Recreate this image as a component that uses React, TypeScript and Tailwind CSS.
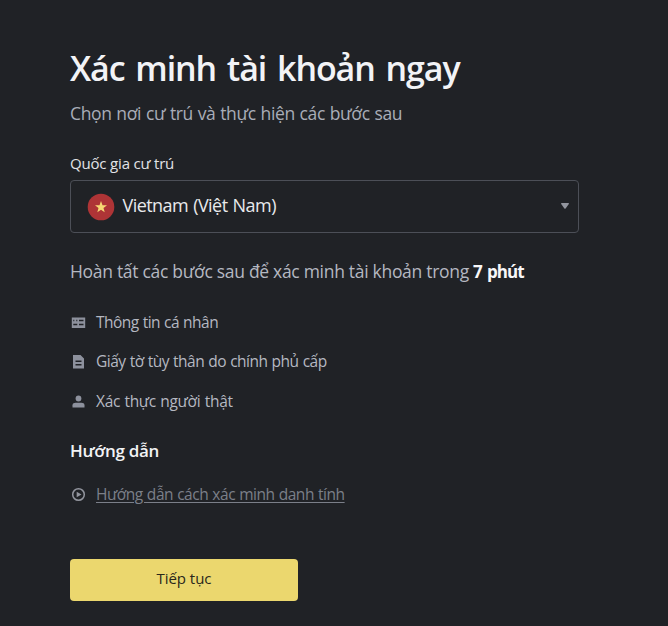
import React from "react";

const icons = {
  card: (
    <svg viewBox="0 0 16 16" className="h-4 w-4 shrink-0" fill="currentColor">
      <path fillRule="evenodd" d="M1.800 3.500h13.400v10.500H1.800zM3.300 9.700v1.600h4V9.700zM9 5.700v1.600h4.500V5.700zM9 9.700v1.600h4.500V9.700zM3.300 5.700v1.600h1V5.700zM6.300 5.700v1.600h1V5.700z" />
    </svg>
  ),
  document: (
    <svg viewBox="0 0 16 16" className="h-4 w-4 shrink-0" fill="currentColor">
      <path fillRule="evenodd" d="M3 2h7.500L14 5.500v10H3zM5.500 7.500v1.400h6V7.500zM5.500 11v1.400h6V11z" />
    </svg>
  ),
  person: (
    <svg viewBox="0 0 16 16" className="h-4 w-4 shrink-0" fill="currentColor">
      <circle cx="8.500" cy="5.500" r="2.900" />
      <path d="M2.500 14.500v-2.200c0-1.800 1.600-2.500 3-2.500h6c1.500 0 3 .7 3 2.500v2.200z" />
    </svg>
  ),
};

const steps = [
  { icon: icons.card, text: "Thông tin cá nhân", spacing: "tracking-[-0.52px] [word-spacing:0.5px]" },
  { icon: icons.document, text: "Giấy tờ tùy thân do chính phủ cấp", spacing: "tracking-[-0.49px] [word-spacing:0.5px]" },
  { icon: icons.person, text: "Xác thực người thật", spacing: "tracking-[-0.28px] [word-spacing:0.5px]" },
];

export default function App() {
  return (
    <main className="flex h-[626px] w-[668px] flex-col items-start overflow-hidden whitespace-nowrap bg-[#202226] pl-[70px] font-['Open_Sans','Noto_Sans',sans-serif] text-[#b5b8c1]">
      <h1 className="mt-[44px] h-12 text-[34px] leading-[48px] font-semibold tracking-[-1.080px] [word-spacing:3px] text-[#f2f3f6]">
        <span>Xác minh tài khoản ngay</span>
      </h1>
      <p className="mt-[9px] h-6 text-[17.500px] leading-6 tracking-[-0.340px] [word-spacing:0.5px] text-[#a9adb8]">
        <span>Chọn nơi cư trú và thực hiện các bước sau</span>
      </p>
      <label className="mt-[28px] h-5 text-[15px] leading-5 tracking-[-0.18px] text-[#e2e3e7]">
        <span>Quốc gia cư trú</span>
      </label>
      <button className="mt-[7px] flex h-[53px] w-[509px] items-center rounded-[4px] border border-[#4c4f57] pr-[9px] pl-[15.500px]">
        <svg viewBox="0 0 28 28" className="h-7 w-7" aria-hidden="true">
          <circle cx="14" cy="14" r="13.300" fill="#ae3436" />
          <path d="M14 8l1.500 4.200 4.500.1-3.500 2.700 1.200 4.300L14 16.700l-3.700 2.600 1.200-4.300L8 12.300l4.500-.1z" fill="#f6d873" />
        </svg>
        <span className="mb-[3px] ml-2 text-[18px] leading-6 tracking-[-0.56px] [word-spacing:1px] text-[#e8e9ec]">Vietnam (Việt Nam)</span>
        <svg viewBox="0 0 8 6" className="mb-px ml-auto h-[6px] w-2" fill="#92959e">
          <path d="M0 .8Q0 0 .8 0h6.400Q8 0 8 .8L4.600 5.500Q4 6 3.400 5.500z" />
        </svg>
      </button>
      <p className="mt-[26px] h-6 text-[17.500px] leading-6 tracking-[-0.3px]">
        <span>Hoàn tất các bước sau để xác minh tài khoản trong </span>
        <strong className="text-[17px] font-bold tracking-[-0.9px] [word-spacing:1.500px] text-[#f7f7f8]">7 phút</strong>
      </p>
      <ul className="mt-[19px] flex flex-col">
        {steps.map((step) => (
          <li key={step.text} className="flex h-[39.500px] items-center text-[#8d919d]">
            <span>{step.icon}</span>
            <span className={`ml-[10px] text-[15.500px] leading-5 text-[#b5b8c1] ${step.spacing}`}>{step.text}</span>
          </li>
        ))}
      </ul>
      <h2 className="mt-[18px] h-6 text-[17px] leading-6 font-semibold tracking-[-0.3px] text-[#f2f3f5]">
        <span>Hướng dẫn</span>
      </h2>
      <a className="mt-[19px] flex h-6 items-center text-[#7b7f89]">
        <svg viewBox="0 0 16 16" className="h-4 w-4 shrink-0" fill="none">
          <circle cx="8.500" cy="8.500" r="5.800" stroke="#92959e" strokeWidth="1.500" />
          <path d="M6.700 5.700L11.500 8.500l-4.800 2.800z" fill="#92959e" />
        </svg>
        <span className="ml-[10px] text-[15.500px] leading-6 tracking-[-0.46px] [word-spacing:0.5px] underline decoration-1 underline-offset-2">Hướng dẫn cách xác minh danh tính</span>
      </a>
      <button className="mt-[53px] h-[42px] w-[228px] rounded-[4px] bg-[#ebd76e] pb-[2px] text-[15px] font-medium tracking-[-0.05px] text-[#29271b]">
        <span>Tiếp tục</span>
      </button>
    </main>
  );
}
